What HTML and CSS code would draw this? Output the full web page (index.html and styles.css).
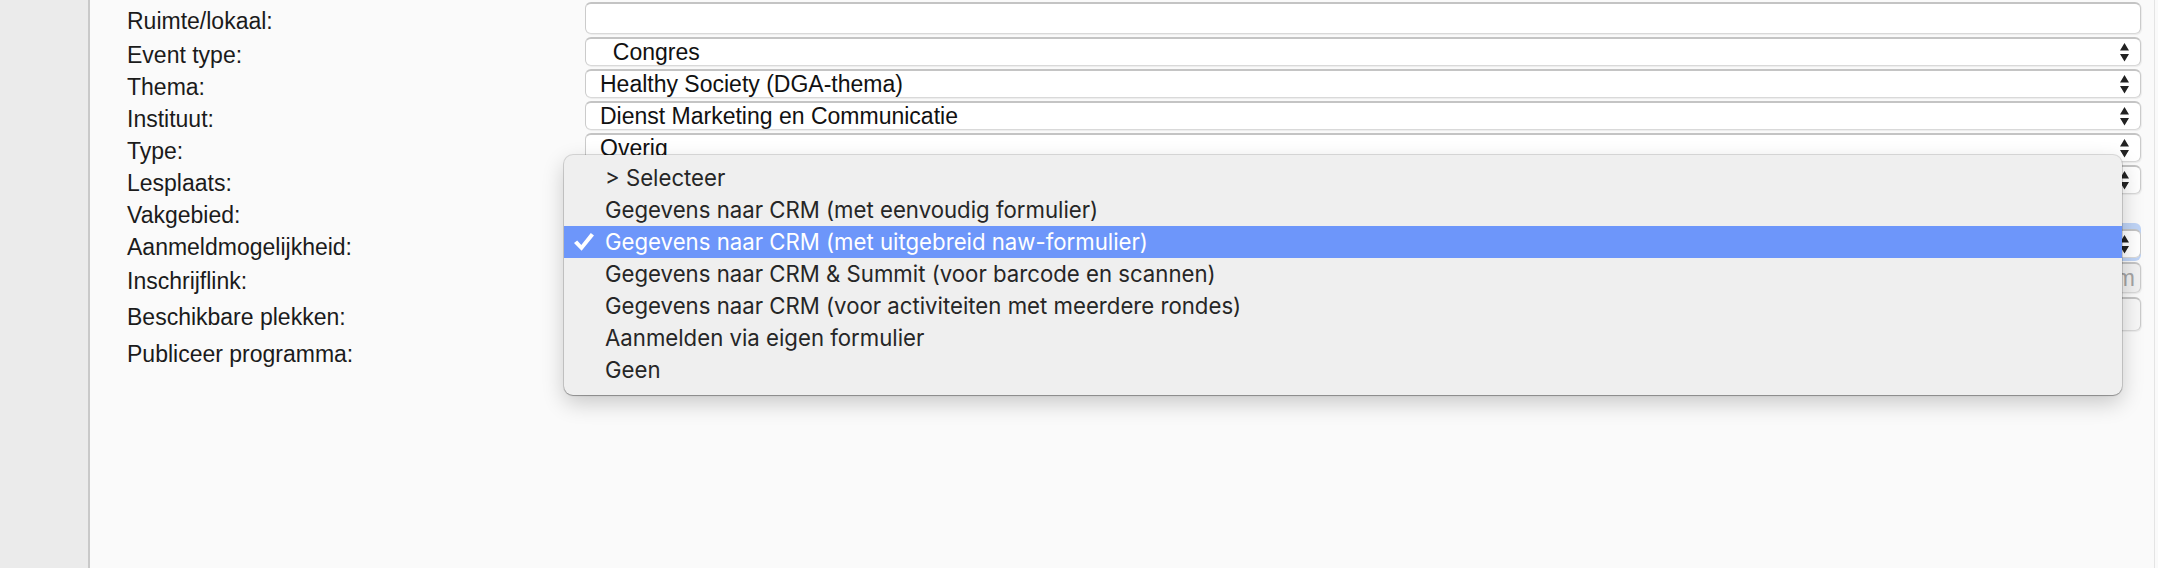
FILE: index.html
```html
<!DOCTYPE html>
<html lang="nl">
<head>
<meta charset="utf-8">
<title>Event bewerken</title>
<link rel="stylesheet" href="styles.css">
</head>
<body>
<div class="app">
  <aside class="sidebar"></aside>
  <main class="content">
    <div class="form">
      <div class="row">
        <label class="lbl">Ruimte/lokaal:</label>
        <div class="field text"></div>
      </div>
      <div class="row gap3">
        <label class="lbl">Event type:</label>
        <div class="field select"><span class="val">&nbsp;&nbsp;Congres</span><svg class="arrows" viewBox="0 0 9 19" width="9" height="19"><path d="M4.5 0L9 7.5H0Z M0 11H9L4.5 18.5Z"/></svg></div>
      </div>
      <div class="row gap3">
        <label class="lbl">Thema:</label>
        <div class="field select"><span class="val">Healthy Society (DGA-thema)</span><svg class="arrows" viewBox="0 0 9 19" width="9" height="19"><path d="M4.5 0L9 7.5H0Z M0 11H9L4.5 18.5Z"/></svg></div>
      </div>
      <div class="row gap3">
        <label class="lbl">Instituut:</label>
        <div class="field select"><span class="val">Dienst Marketing en Communicatie</span><svg class="arrows" viewBox="0 0 9 19" width="9" height="19"><path d="M4.5 0L9 7.5H0Z M0 11H9L4.5 18.5Z"/></svg></div>
      </div>
      <div class="row gap3">
        <label class="lbl">Type:</label>
        <div class="field select"><span class="val">Overig</span><svg class="arrows" viewBox="0 0 9 19" width="9" height="19"><path d="M4.5 0L9 7.5H0Z M0 11H9L4.5 18.5Z"/></svg></div>
      </div>
      <div class="row gap3">
        <label class="lbl">Lesplaats:</label>
        <div class="field select"><span class="val">&gt; Selecteer</span><svg class="arrows" viewBox="0 0 9 19" width="9" height="19"><path d="M4.5 0L9 7.5H0Z M0 11H9L4.5 18.5Z"/></svg></div>
      </div>
      <div class="row gap3">
        <label class="lbl">Vakgebied:</label>
        <div class="field empty"></div>
      </div>
      <div class="row gap3">
        <label class="lbl">Aanmeldmogelijkheid:</label>
        <div class="field select focus"><span class="val">Gegevens naar CRM (met uitgebreid naw-formulier)</span><svg class="arrows" viewBox="0 0 9 19" width="9" height="19"><path d="M4.5 0L9 7.5H0Z M0 11H9L4.5 18.5Z"/></svg></div>
      </div>
      <div class="row gap4">
        <label class="lbl">Inschrijflink:</label>
        <div class="field link"><span class="val">https://www.maastrichtuniversity.nl/aanmeldform</span></div>
      </div>
      <div class="row gap4">
        <label class="lbl">Beschikbare plekken:</label>
        <div class="field num"></div>
      </div>
      <div class="row gap3">
        <label class="lbl">Publiceer programma:</label>
        <div class="field empty tall"></div>
      </div>
    </div>

    <div class="menu">
      <div class="item">&gt; Selecteer</div>
      <div class="item">Gegevens naar CRM (met eenvoudig formulier)</div>
      <div class="item selected"><svg class="check" viewBox="0 0 20 18" width="20" height="18"><path d="M0 10L3.2 7.4L7.3 12L16.8 0L20 2.6L7.6 17.8Z"/></svg>Gegevens naar CRM (met uitgebreid naw-formulier)</div>
      <div class="item">Gegevens naar CRM &amp; Summit (voor barcode en scannen)</div>
      <div class="item">Gegevens naar CRM (voor activiteiten met meerdere rondes)</div>
      <div class="item">Aanmelden via eigen formulier</div>
      <div class="item">Geen</div>
    </div>
  </main>
</div>
</body>
</html>
```

FILE: styles.css
```css
html, body {
  margin: 0;
  padding: 0;
  width: 2158px;
  height: 568px;
  overflow: hidden;
  background: #fafafa;
}

body {
  font-family: "Liberation Sans", Arial, sans-serif;
  color: #1b1b1b;
}

.app {
  display: flex;
  height: 568px;
}

.sidebar {
  width: 88px;
  flex: none;
  background: #ebebeb;
  border-right: 2px solid #c9c9c9;
}

.content {
  flex: 1;
  position: relative;
  background: #fafafa;
  padding: 2px 0 0 37px;
  border-right: 1px solid #e4e4e4;
  margin-right: 3px;
}

.form {
  width: 2014px;
  display: flex;
  flex-direction: column;
}

.row {
  display: grid;
  grid-template-columns: 458px 1556px;
  align-items: center;
}

.gap3 { margin-top: 3px; }
.gap4 { margin-top: 4px; }

.lbl {
  font-size: 23px;
  line-height: 20px;
  padding-top: 6px;
  color: #1b1b1b;
  white-space: nowrap;
}

.field {
  box-sizing: border-box;
  background: #ffffff;
  border: 1px solid #cbcbcb;
  border-top: 2px solid #c4c4c4;
  border-bottom-color: #d9d9d9;
  border-radius: 6px;
  box-shadow: 1px 1px 1px rgba(0, 0, 0, 0.06);
}

.text { height: 32px; }

.select {
  height: 29px;
  display: flex;
  align-items: center;
  justify-content: space-between;
  padding: 0 11px 0 14px;
  font-size: 23px;
  color: #111;
  overflow: hidden;
  white-space: nowrap;
}

.select .val { line-height: 24px; }

.arrows {
  flex: none;
  fill: #222;
  display: block;
}

.focus {
  box-shadow: 0 -6px 0 0 #bfd4f6, 0 3px 0 0 #bfd4f6;
}

.empty {
  height: 29px;
  background: transparent;
  border: none;
  box-shadow: none;
}

.empty.tall { height: 34px; }

.link {
  height: 31px;
  background: #f1f1f1;
  display: flex;
  align-items: center;
  justify-content: flex-end;
  padding-right: 5px;
  overflow: hidden;
  white-space: nowrap;
  font-size: 23px;
  color: #a4a4a4;
}

.num {
  height: 34px;
  background: #f7f7f7;
}

.menu {
  position: absolute;
  left: 474px;
  top: 155px;
  width: 1558px;
  height: 240px;
  box-sizing: border-box;
  padding: 7px 0 9px;
  background: #efefef;
  border-radius: 9px;
  box-shadow: 0 0 0 1px rgba(0, 0, 0, 0.13), 0 1px 1px rgba(0, 0, 0, 0.25), 0 8px 22px rgba(0, 0, 0, 0.2);
}

.item {
  position: relative;
  height: 32px;
  line-height: 32px;
  padding-left: 41px;
  font-family: Inter, "Liberation Sans", sans-serif;
  font-size: 22.2px;
  color: #262626;
  white-space: nowrap;
}

.item.selected {
  background: #6d96fa;
  color: #ffffff;
}

.check {
  position: absolute;
  left: 10px;
  top: 7px;
  fill: #ffffff;
}
```
